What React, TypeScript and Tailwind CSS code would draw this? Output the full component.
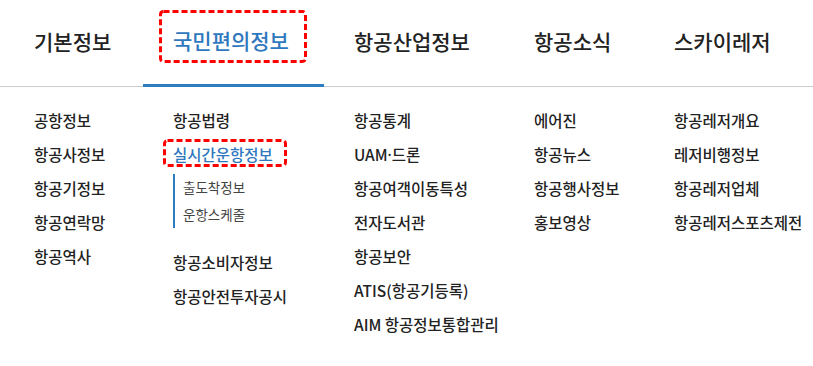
import React from "react";

const FONT = { fontFamily: '"Noto Sans CJK KR", "Noto Sans", sans-serif' };

function DashedBox({ className }: { className: string }) {
  return (
    <svg className={`pointer-events-none absolute ${className}`} preserveAspectRatio="none">
      <rect
        x="1.5"
        y="1.5"
        width="calc(100% - 3px)"
        height="calc(100% - 3px)"
        rx="3"
        fill="none"
        stroke="#ff0000"
        strokeWidth="3"
        strokeDasharray="6 3"
      />
    </svg>
  );
}

const navItems = [
  { label: "기본정보", w: "w-[139px]" },
  { label: "국민편의정보", w: "w-[181px]", active: true },
  { label: "항공산업정보", w: "w-[180px]" },
  { label: "항공소식", w: "w-[140px]" },
  { label: "스카이레저", w: "flex-1" },
];

function Item({ children, blue }: { children: React.ReactNode; blue?: boolean }) {
  return (
    <li className={`h-[34px] leading-[34px] text-[15.5px] font-medium whitespace-nowrap ${blue ? "text-[#2f78be]" : "text-[#222]"}`}>
      {children}
    </li>
  );
}

export default function App() {
  return (
    <div className="w-[813px] h-[366px] bg-white overflow-hidden" style={FONT}>
      <nav className="flex h-[87px] border-b border-[#cccccc] pl-[4px]">
        {navItems.map((n) => (
          <div
            key={n.label}
            className={`${n.w} relative flex items-center pl-[30px] pb-[2px] text-[21px] font-medium whitespace-nowrap ${
              n.active ? "text-[#2f78be] border-b-[3px] border-[#2f7dc1] mb-[-1px]" : "text-[#222]"
            }`}
          >
            {n.label}
            {n.active && <DashedBox className="left-[16px] top-[10px] w-[148px] h-[53px]" />}
          </div>
        ))}
      </nav>
      <div className="flex pl-[4px] pt-[16px]">
        <ul className="w-[139px] pl-[30px]">
          <Item>공항정보</Item>
          <Item>항공사정보</Item>
          <Item>항공기정보</Item>
          <Item>항공연락망</Item>
          <Item>항공역사</Item>
        </ul>
        <ul className="w-[181px] pl-[30px]">
          <Item>항공법령</Item>
          <li className="relative h-[34px] leading-[34px] text-[15.5px] font-medium text-[#2f78be] whitespace-nowrap">
            실시간운항정보
            <DashedBox className="left-[-10px] top-[2px] w-[124px] h-[28px]" />
          </li>
          <li className="mt-[3px]">
            <ul className="border-l-2 border-[#2f7dc1] pl-[8px]">
              <li className="h-[27px] leading-[27px] text-[13.5px] text-[#444]">출도착정보</li>
              <li className="h-[27px] leading-[27px] text-[13.5px] text-[#444]">운항스케줄</li>
            </ul>
          </li>
          <li className="mt-[17px]">
            <ul>
              <Item>항공소비자정보</Item>
              <Item>항공안전투자공시</Item>
            </ul>
          </li>
        </ul>
        <ul className="w-[180px] pl-[30px]">
          <Item>항공통계</Item>
          <Item>
            UAM<span style={{ fontFamily: '"Noto Sans", sans-serif' }}>·</span>드론
          </Item>
          <Item>항공여객이동특성</Item>
          <Item>전자도서관</Item>
          <Item>항공보안</Item>
          <Item>ATIS(항공기등록)</Item>
          <Item>AIM 항공정보통합관리</Item>
        </ul>
        <ul className="w-[140px] pl-[30px]">
          <Item>에어진</Item>
          <Item>항공뉴스</Item>
          <Item>항공행사정보</Item>
          <Item>홍보영상</Item>
        </ul>
        <ul className="flex-1 pl-[30px]">
          <Item>항공레저개요</Item>
          <Item>레저비행정보</Item>
          <Item>항공레저업체</Item>
          <Item>항공레저스포츠제전</Item>
        </ul>
      </div>
    </div>
  );
}
